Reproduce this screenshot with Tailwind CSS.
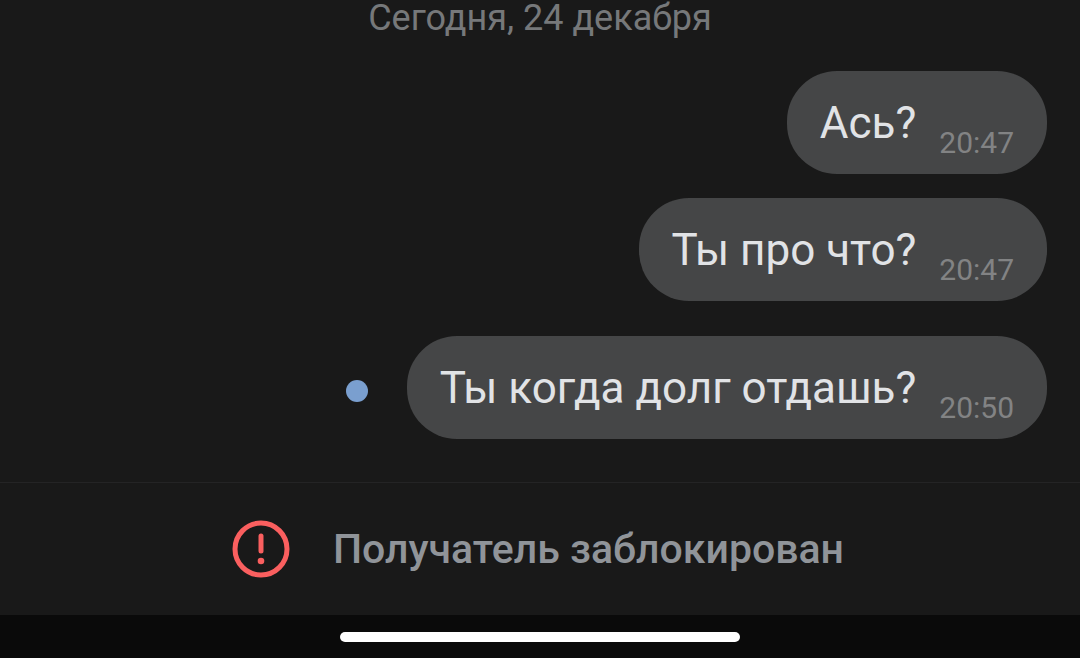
<!DOCTYPE html>
<html lang="ru">
<head>
<meta charset="utf-8">
<meta name="viewport" content="width=device-width, initial-scale=1">
<title>Сообщения</title>
<script src="https://cdn.jsdelivr.net/npm/@tailwindcss/browser@4"></script>
</head>
<body class="flex min-h-screen flex-col bg-[#191919] font-['Roboto',sans-serif]">
<main class="flex flex-1 flex-col px-[33px] pb-[43px]">
<time class="text-center text-[36px] leading-9 text-[#76787a]">Сегодня, 24 декабря</time>
<ol class="mt-[35px] flex flex-col items-end">
<li class="flex h-[103px] items-center gap-[23px] rounded-[50px] bg-[#454647] px-[33px]">
<p class="text-[44px] leading-none text-[#e1e3e6]">Ась?</p>
<time class="pt-10 text-[30px] leading-none text-[#828384]">20:47</time>
</li>
<li class="mt-6 flex h-[103px] items-center gap-[23px] rounded-[50px] bg-[#454647] px-[33px]">
<p class="text-[44px] leading-none text-[#e1e3e6]">Ты про что?</p>
<time class="pt-10 text-[30px] leading-none text-[#828384]">20:47</time>
</li>
<li class="mt-[35px] flex items-center gap-[39px]">
<span class="mt-1.5 size-[22px] rounded-full bg-[#7a9fcf]" role="img" aria-label="Не прочитано"></span>
<div class="flex h-[103px] items-center gap-[23px] rounded-[50px] bg-[#454647] px-[33px]">
<p class="text-[44px] leading-none text-[#e1e3e6]">Ты когда долг отдашь?</p>
<time class="pt-10 text-[30px] leading-none text-[#828384]">20:50</time>
</div>
</li>
</ol>
</main>
<section class="flex h-[133px] items-center justify-center gap-[43px] border-t border-[#242425] bg-[#191919] pr-1" role="status">
<svg class="size-[58px]" viewBox="0 0 58 58" fill="none" aria-hidden="true">
<circle cx="29" cy="29" r="26" stroke="#fa5f5f" stroke-width="5"/>
<path d="M29 16v15" stroke="#fa5f5f" stroke-width="5" stroke-linecap="round"/>
<circle cx="29" cy="41" r="3.3" fill="#fa5f5f"/>
</svg>
<p class="text-[41px] leading-none font-medium text-[#909499]">Получатель заблокирован</p>
</section>
<footer class="flex h-[43px] items-center justify-center bg-[#0a0a0a]">
<div class="h-[10px] w-[400px] rounded-full bg-white"></div>
</footer>
</body>
</html>
